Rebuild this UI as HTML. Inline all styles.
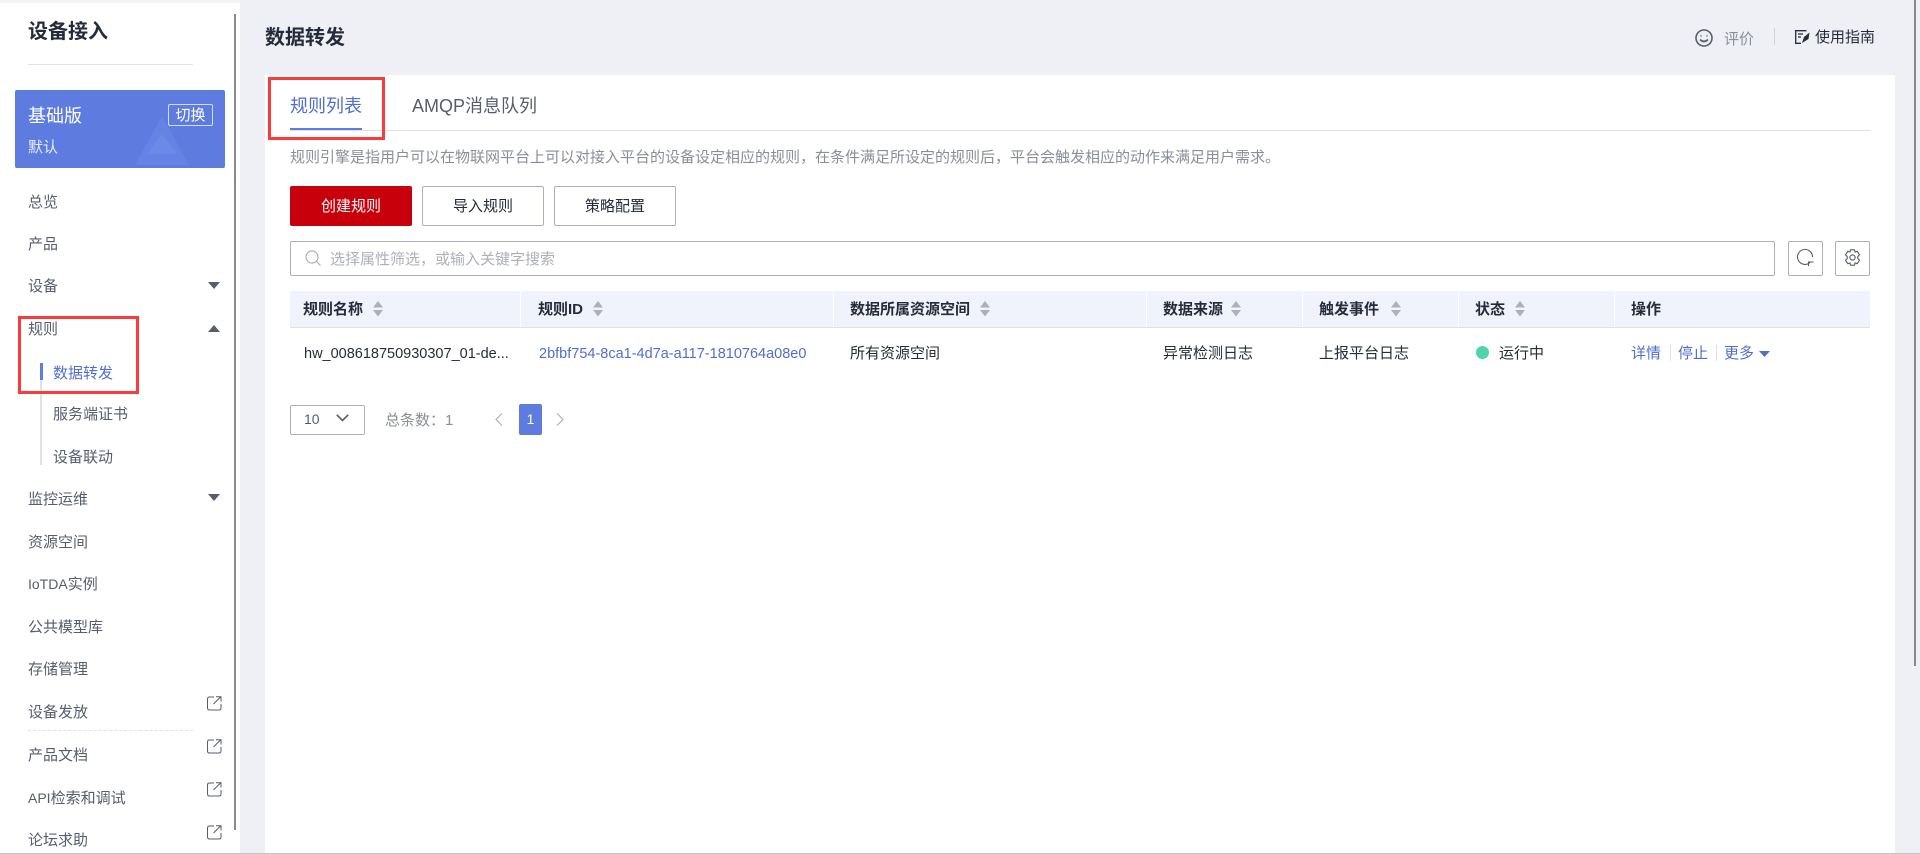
<!DOCTYPE html>
<html lang="zh-CN"><head><meta charset="utf-8"><title>数据转发</title>
<style>
html,body{margin:0;padding:0}
body{width:1920px;height:854px;overflow:hidden;background:#eef0f5;position:relative;font:15px/20px "Liberation Sans","WenQuanYi Zen Hei","Noto Sans CJK SC",sans-serif;color:#575d6c}
.a{position:absolute;white-space:nowrap}
.m{position:absolute;left:28px;margin-top:2px;white-space:nowrap;line-height:20px;color:#575d6c}
.h{position:absolute;top:300px;font-weight:700;color:#252b3a;white-space:nowrap}
.c{position:absolute;top:344px;color:#252b3a;white-space:nowrap}
.lat{font-size:14.5px}
.l{color:#526ecc}
.btn{position:absolute;top:186px;height:40px;line-height:40px;box-sizing:border-box;border:1px solid #adb0b8;border-radius:2px;text-align:center;color:#252b3a;background:#fff}
.sq{position:absolute;top:241px;width:35px;height:35px;box-sizing:border-box;border:1px solid #adb0b8;border-radius:2px;background:#fff}
.red{position:absolute;box-sizing:border-box;border:3px solid #fb3a3a}
.sep{position:absolute;top:291px;width:1px;height:36px;background:#fff}
svg{position:absolute;display:block;overflow:visible}
</style></head><body>
<!-- sidebar -->
<div class="a" style="left:0;top:0;width:240px;height:854px;background:#fff"></div>
<div class="a" style="left:0;top:0;width:240px;height:3px;background:#f3f3f5"></div>
<div class="a" style="left:234px;top:14px;width:2px;height:816px;background:#8a8a8a"></div>
<div class="a" style="left:28px;top:18px;font-size:20px;line-height:28px;font-weight:700;color:#252b3a">设备接入</div>
<div class="a" style="left:28px;top:64px;width:165px;height:1px;background:#dfe1e6"></div>
<div class="a" style="left:15px;top:90px;width:210px;height:78px;background:#5e7ce0;border-radius:2px"></div>
<svg style="left:135px;top:116px" width="54" height="50"><path d="M27 0L54 49H0Z" fill="#6b88e6" opacity=".6"/><path d="M27 18L42 38H12Z" fill="#7190ea" opacity=".5"/></svg>
<div class="a" style="left:28px;top:103px;font-size:18px;line-height:26px;color:#fff">基础版</div>
<div class="a" style="left:168px;top:104px;width:45px;height:22px;box-sizing:border-box;border:1px solid #d5ddf7;border-radius:2px;color:#fff;text-align:center;line-height:22px">切换</div>
<div class="a" style="left:28px;top:138px;color:#e8edfb">默认</div>

<div class="m" style="top:191px">总览</div>
<div class="m" style="top:233px">产品</div>
<div class="m" style="top:275px">设备</div>
<div class="m" style="top:318px">规则</div>
<div class="m" style="top:362px;left:53px;color:#526ecc">数据转发</div>
<div class="m" style="top:403px;left:53px">服务端证书</div>
<div class="m" style="top:446px;left:53px">设备联动</div>
<div class="m" style="top:488px">监控运维</div>
<div class="m" style="top:531px">资源空间</div>
<div class="m" style="top:574px;margin-top:0"><span style="font-size:14px">IoTDA</span>实例</div>
<div class="m" style="top:616px">公共模型库</div>
<div class="m" style="top:658px">存储管理</div>
<div class="m" style="top:701px">设备发放</div>
<div class="m" style="top:744px">产品文档</div>
<div class="m" style="top:787px;margin-top:1px"><span style="font-size:14px">API</span>检索和调试</div>
<div class="m" style="top:829px">论坛求助</div>
<div class="a" style="left:40px;top:363px;width:2px;height:102px;background:#dfe1e6"></div>
<div class="a" style="left:40px;top:363px;width:3px;height:17px;background:#5e7ce0"></div>
<div class="a" style="left:28px;top:730px;width:165px;height:0;border-top:1px dashed #dfe1e6"></div>

<svg style="left:208px;top:282px" width="12" height="8"><path d="M0 0H12L6 7Z" fill="#575d6c"/></svg>
<svg style="left:208px;top:325px" width="12" height="8"><path d="M0 7H12L6 0Z" fill="#575d6c"/></svg>
<svg style="left:208px;top:494px" width="12" height="8"><path d="M0 0H12L6 7Z" fill="#575d6c"/></svg>
<svg style="left:207px;top:696px" width="15" height="15" fill="none" stroke="#575d6c" stroke-width="1"><path d="M7 1H2.5Q.5 1 .5 3V12Q.5 14 2.5 14H12Q14 14 14 12V8M6.5 8L13.5 1M9 .7H14V5.5"/></svg>
<svg style="left:207px;top:739px" width="15" height="15" fill="none" stroke="#575d6c" stroke-width="1"><path d="M7 1H2.5Q.5 1 .5 3V12Q.5 14 2.5 14H12Q14 14 14 12V8M6.5 8L13.5 1M9 .7H14V5.5"/></svg>
<svg style="left:207px;top:782px" width="15" height="15" fill="none" stroke="#575d6c" stroke-width="1"><path d="M7 1H2.5Q.5 1 .5 3V12Q.5 14 2.5 14H12Q14 14 14 12V8M6.5 8L13.5 1M9 .7H14V5.5"/></svg>
<svg style="left:207px;top:825px" width="15" height="15" fill="none" stroke="#575d6c" stroke-width="1"><path d="M7 1H2.5Q.5 1 .5 3V12Q.5 14 2.5 14H12Q14 14 14 12V8M6.5 8L13.5 1M9 .7H14V5.5"/></svg>

<!-- header -->
<div class="a" style="left:265px;top:24px;font-size:20px;line-height:28px;font-weight:700;color:#252b3a">数据转发</div>
<svg style="left:1695px;top:29px" width="18" height="18" fill="none" stroke="#575d6c" stroke-width="1.6"><circle cx="9" cy="9" r="8"/><path d="M5 10.5Q9 14.5 13 10.5"/><path d="M6 6.3V7.5M12 6.3V7.5" stroke-width="1.4"/></svg>
<div class="a" style="left:1724px;top:30px;color:#8a8e99">评价</div>
<div class="a" style="left:1774px;top:28px;width:1px;height:17px;background:#d0d2d8"></div>
<svg style="left:1795px;top:30px" width="15" height="14" fill="none" stroke="#252b3a" stroke-width="1.3"><path d="M11.5 .7H.7V13.3H6M3 4H8M3 7H6"/><path d="M7 13L9 7L14.5 2.5L13.5 9Z" fill="#252b3a" stroke="none"/></svg>
<div class="a" style="left:1815px;top:28px;color:#252b3a">使用指南</div>
<div class="a" style="left:1914px;top:0;width:2px;height:666px;background:#8a8a8a"></div>

<!-- panel -->
<div class="a" style="left:265px;top:75px;width:1630px;height:779px;background:#fff"></div>
<div class="a" style="left:290px;top:93px;font-size:18px;line-height:26px;color:#526ecc">规则列表</div>
<div class="a" style="left:412px;top:93px;font-size:18px;line-height:26px;color:#575d6c">AMQP消息队列</div>
<div class="a" style="left:290px;top:130px;width:1580px;height:1px;background:#dfe1e6"></div>
<div class="a" style="left:290px;top:128px;width:72px;height:2px;background:#5e7ce0"></div>
<div class="a" style="left:290px;top:148px;color:#8a8e99">规则引擎是指用户可以在物联网平台上可以对接入平台的设备设定相应的规则，在条件满足所设定的规则后，平台会触发相应的动作来满足用户需求。</div>

<div class="btn" style="left:290px;width:122px;background:#c7000b;border-color:#c7000b;color:#fff">创建规则</div>
<div class="btn" style="left:422px;width:122px">导入规则</div>
<div class="btn" style="left:554px;width:122px">策略配置</div>

<div class="a" style="left:290px;top:241px;width:1485px;height:35px;box-sizing:border-box;border:1px solid #adb0b8;border-radius:2px"></div>
<svg style="left:305px;top:250px" width="17" height="17" fill="none" stroke="#adb0b8" stroke-width="1.2"><circle cx="7" cy="7" r="6"/><path d="M11.5 11.5L15.5 15.5"/></svg>
<div class="a" style="left:330px;top:250px;color:#adb0b8">选择属性筛选，或输入关键字搜索</div>
<div class="sq" style="left:1788px"></div>
<svg style="left:1796px;top:249px" width="19" height="19" fill="none" stroke="#575d6c" stroke-width="1.1"><path d="M14 13.5A7.5 7.5 0 1 1 16.5 8"/><path d="M17.5 13H12.5V17"/></svg>
<div class="sq" style="left:1835px"></div>
<svg style="left:1844px;top:249px" width="17" height="17" fill="none" stroke="#575d6c" stroke-width="1.1"><path d="M6.5.8H10.5L11 3L13.2 2.3L15.5 5.8L13.8 7.5V9.5L15.5 11.2L13.2 14.7L11 14L10.5 16.2H6.5L6 14L3.8 14.7L1.5 11.2L3.2 9.5V7.5L1.5 5.8L3.8 2.3L6 3Z"/><circle cx="8.5" cy="8.5" r="2.6"/></svg>

<!-- table -->
<div class="a" style="left:290px;top:291px;width:1580px;height:36px;background:#f0f3fb"></div>
<div class="a" style="left:290px;top:327px;width:1580px;height:1px;background:#dfe1e6"></div>
<div class="sep" style="left:520px"></div><div class="sep" style="left:833px"></div><div class="sep" style="left:1146px"></div><div class="sep" style="left:1302px"></div><div class="sep" style="left:1458px"></div><div class="sep" style="left:1614px"></div>
<div class="h" style="left:303px">规则名称</div>
<div class="h" style="left:538px">规则ID</div>
<div class="h" style="left:850px">数据所属资源空间</div>
<div class="h" style="left:1163px">数据来源</div>
<div class="h" style="left:1319px">触发事件</div>
<div class="h" style="left:1475px">状态</div>
<div class="h" style="left:1631px">操作</div>
<svg style="left:373px;top:301px" width="10" height="16" fill="#adb0b8"><path d="M5 0L10 6.5H0ZM0 9H10L5 15.5Z"/></svg>
<svg style="left:593px;top:301px" width="10" height="16" fill="#adb0b8"><path d="M5 0L10 6.5H0ZM0 9H10L5 15.5Z"/></svg>
<svg style="left:980px;top:301px" width="10" height="16" fill="#adb0b8"><path d="M5 0L10 6.5H0ZM0 9H10L5 15.5Z"/></svg>
<svg style="left:1231px;top:301px" width="10" height="16" fill="#adb0b8"><path d="M5 0L10 6.5H0ZM0 9H10L5 15.5Z"/></svg>
<svg style="left:1391px;top:301px" width="10" height="16" fill="#adb0b8"><path d="M5 0L10 6.5H0ZM0 9H10L5 15.5Z"/></svg>
<svg style="left:1515px;top:301px" width="10" height="16" fill="#adb0b8"><path d="M5 0L10 6.5H0ZM0 9H10L5 15.5Z"/></svg>
<div class="c lat" style="left:304px">hw_008618750930307_01-de...</div>
<div class="c l lat" style="left:539px">2bfbf754-8ca1-4d7a-a117-1810764a08e0</div>
<div class="c" style="left:850px">所有资源空间</div>
<div class="c" style="left:1163px">异常检测日志</div>
<div class="c" style="left:1319px">上报平台日志</div>
<div class="a" style="left:1476px;top:346px;width:13px;height:13px;border-radius:50%;background:#50d4ab"></div>
<div class="c" style="left:1499px">运行中</div>
<div class="c l" style="left:1631px">详情</div>
<div class="a" style="left:1670px;top:345px;width:1px;height:16px;background:#dfe1e6"></div>
<div class="c l" style="left:1678px">停止</div>
<div class="a" style="left:1716px;top:345px;width:1px;height:16px;background:#dfe1e6"></div>
<div class="c l" style="left:1724px">更多</div>
<svg style="left:1759px;top:351px" width="11" height="7"><path d="M0 0H11L5.5 6Z" fill="#526ecc"/></svg>

<!-- pagination -->
<div class="a" style="left:290px;top:405px;width:75px;height:30px;box-sizing:border-box;border:1px solid #adb0b8;border-radius:2px;background:#fff"></div>
<div class="a" style="left:304px;top:409px;color:#575d6c;font-size:14px">10</div>
<svg style="left:336px;top:414px" width="13" height="8" fill="none" stroke="#575d6c" stroke-width="1.6"><path d="M.8 .8L6.5 6.5L12.2 .8"/></svg>
<div class="a" style="left:385px;top:411px;color:#8a8e99">总条数：1</div>
<svg style="left:495px;top:413px" width="8" height="13" fill="none" stroke="#adb0b8" stroke-width="1.2"><path d="M7 .5L1 6.5L7 12.5"/></svg>
<div class="a" style="left:519px;top:404px;width:23px;height:31px;background:#5e7ce0;border-radius:2px;color:#fff;text-align:center;line-height:31px;font-size:14px">1</div>
<svg style="left:556px;top:413px" width="8" height="13" fill="none" stroke="#adb0b8" stroke-width="1.2"><path d="M1 .5L7 6.5L1 12.5"/></svg>

<!-- annotations -->
<div class="red" style="left:268px;top:77px;width:117px;height:63px"></div>
<div class="red" style="left:18px;top:316px;width:121px;height:78px"></div>
<div class="a" style="left:0;top:853px;width:1920px;height:1px;background:#c4c4c4"></div>
</body></html>
